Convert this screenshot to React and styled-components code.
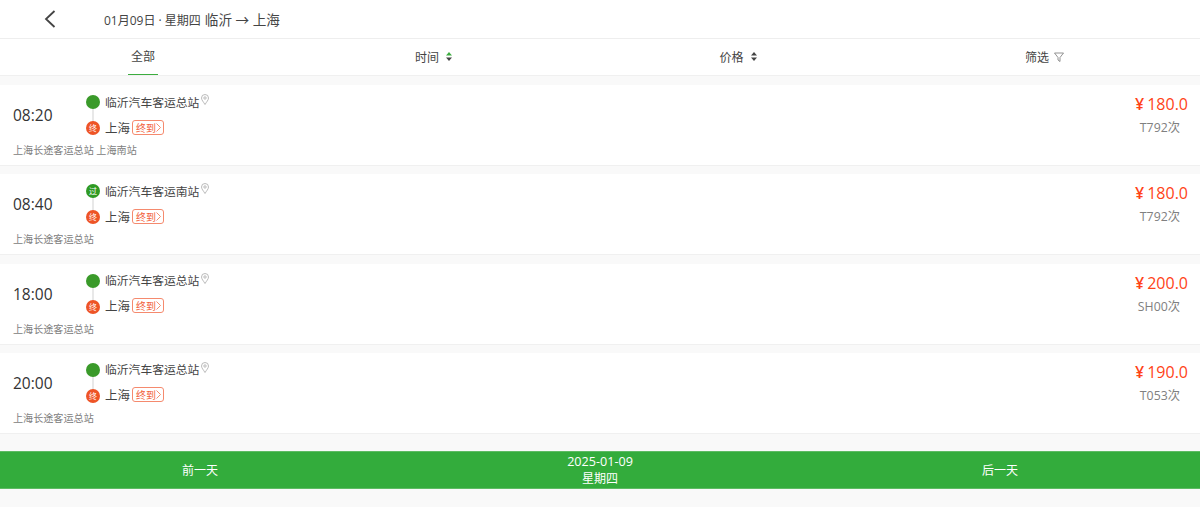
import styled, { createGlobalStyle } from "styled-components";

const GlobalStyle = createGlobalStyle`
  html, body {
    margin: 0;
    background: #f9f9f9;
    font-family: "Open Sans", "Noto Sans CJK SC", sans-serif;
    color: #333;
  }
`;

const Page = styled.div`
  width: 1200px;
  height: 507px;
  overflow: hidden;
  background: #f9f9f9;
`;

const Header = styled.div`
  display: flex;
  align-items: center;
  height: 38px;
  background: #fff;
  border-bottom: 1px solid #eeeeee;
`;

const Back = styled.div`
  display: flex;
  align-items: center;
  width: 104px;
  padding-left: 44px;
  box-sizing: border-box;
`;

const Title = styled.div`
  font-size: 12px;
  color: #444;
`;

const Route = styled.span`
  font-size: 13.6px;
  margin-left: 4px;
`;

const Tabs = styled.div`
  display: grid;
  grid-template-columns: 286px 295px 314px 299px;
  height: 36px;
  padding-right: 6px;
  background: #fff;
  border-bottom: 1px solid #f0f0f0;
`;

const Tab = styled.div`
  display: flex;
  align-items: center;
  justify-content: center;
  gap: 5px;
  padding-bottom: ${(p) => (p.$active ? "0" : "1px")};
  font-size: 12px;
  color: #444;
`;

const TabLabel = styled.div`
  display: flex;
  align-items: center;
  height: 100%;
  padding: 0 3px 1px;
  box-sizing: border-box;
  border-bottom: 1px solid #3cad3f;
`;

const List = styled.div`
  padding-top: 9px;
`;

const Card = styled.div`
  display: flex;
  justify-content: space-between;
  height: 81px;
  margin-bottom: 8.33px;
  padding: 0 12px 0 13px;
  box-sizing: border-box;
  background: #fff;
  border-bottom: 1px solid #f0f0f0;
`;

const Left = styled.div`
  display: flex;
  flex-direction: column;
`;

const Main = styled.div`
  display: flex;
  align-items: center;
  height: 58px;
`;

const Time = styled.div`
  width: 73px;
  padding-top: 2px;
  font-size: 15.5px;
  color: #333;
`;

const Stops = styled.div`
  display: flex;
  flex-direction: column;
  gap: 12px;
  position: relative;
`;

const Stop = styled.div`
  display: flex;
  align-items: center;
  gap: 5px;
  height: 14px;
  font-size: 11.8px;
  color: #444;
`;

const Line = styled.div`
  position: absolute;
  left: 6px;
  top: 13px;
  width: 2px;
  height: 16px;
  background: #e8e8e8;
`;

const Dot = styled.div`
  position: relative;
  display: flex;
  align-items: center;
  justify-content: center;
  flex: none;
  width: 14px;
  height: 14px;
  margin-top: 2px;
  border-radius: 50%;
  background: ${(p) => p.$bg};
  color: #fff;
  font-size: 8px;
  line-height: 1;
`;

const EndName = styled.span`
  font-size: 12.5px;
`;

const EndTag = styled.span`
  display: flex;
  align-items: center;
  height: 13px;
  padding: 0 2px 0 3px;
  margin-left: -3px;
  border: 1px solid #f58a6e;
  border-radius: 3px;
  color: #f2603a;
  font-size: 10px;
`;

const Sub = styled.div`
  font-size: 10.1px;
  color: #808080;
  line-height: 14px;
`;

const Right = styled.div`
  display: flex;
  flex-direction: column;
  align-items: flex-end;
  padding-top: 8px;
`;

const Price = styled.div`
  font-size: 16px;
  line-height: 22px;
  color: #ff4317;
`;

const Yen = styled.span`
  margin-right: 3px;
  font-weight: 600;
`;

const Code = styled.div`
  margin-top: 5px;
  padding-right: 8px;
  font-size: 12.3px;
  line-height: 16px;
  color: #808080;
`;

const Footer = styled.div`
  display: grid;
  grid-template-columns: repeat(3, 1fr);
  align-items: center;
  height: 38px;
  margin-top: 17px;
  background: #33ac3c;
  border-top: 1px solid #5dbb63;
  border-bottom: 1px solid #5dbb63;
  box-sizing: border-box;
  color: #fff;
  font-size: 12px;
  text-align: center;
`;

const DateBox = styled.div`
  line-height: 17px;
`;

const DateText = styled.div`
  font-size: 12.6px;
`;

const Chevron = () => (
  <svg width="12" height="18" viewBox="0 0 12 18" fill="none" stroke="#444" strokeWidth="1.8">
    <path d="M10.5 1 L2 9 L10.5 17" />
  </svg>
);

const Sort = ({ up }) => (
  <svg width="6" height="9" viewBox="0 0 6 9" style={{ marginLeft: 2 }}>
    <path d="M3 0 L6 3.6 L0 3.6 Z" fill={up || "#444"} />
    <path d="M3 9 L6 5.4 L0 5.4 Z" fill="#444" />
  </svg>
);

const Filter = () => (
  <svg width="10" height="10" viewBox="0 0 10 10" fill="none" stroke="#777" strokeWidth="0.8">
    <path d="M0.5 1 H9.5 L6 5.5 V9.5 L4 8 V5.5 Z" />
  </svg>
);

const Pin = () => (
  <svg width="8" height="11" viewBox="0 0 8 11" fill="none" stroke="#aaa" strokeWidth="0.8" style={{ marginLeft: -3, marginTop: -3 }}>
    <path d="M4 10.5 C2.5 8 0.5 6 0.5 4 A3.5 3.5 0 0 1 7.5 4 C7.5 6 5.5 8 4 10.5 Z" />
    <circle cx="4" cy="4" r="1.2" />
  </svg>
);

const TagArrow = () => (
  <svg width="5" height="9" viewBox="0 0 5 9" fill="none" stroke="#f2714d" strokeWidth="0.8">
    <path d="M0.5 0.5 L4.5 4.5 L0.5 8.5" />
  </svg>
);

const trips = [
  { time: "08:20", from: "临沂汽车客运总站", pass: false, sub: "上海长途客运总站 上海南站", price: "180.0", code: "T792次" },
  { time: "08:40", from: "临沂汽车客运南站", pass: true, sub: "上海长途客运总站", price: "180.0", code: "T792次" },
  { time: "18:00", from: "临沂汽车客运总站", pass: false, sub: "上海长途客运总站", price: "200.0", code: "SH00次" },
  { time: "20:00", from: "临沂汽车客运总站", pass: false, sub: "上海长途客运总站", price: "190.0", code: "T053次" },
];

function App() {
  return (
    <Page>
      <GlobalStyle />
      <Header>
        <Back>
          <Chevron />
        </Back>
        <Title>
          01月09日 · 星期四<Route>临沂 → 上海</Route>
        </Title>
      </Header>
      <Tabs>
        <Tab $active>
          <TabLabel>全部</TabLabel>
        </Tab>
        <Tab>
          时间 <Sort up="#3cad3f" />
        </Tab>
        <Tab>
          价格 <Sort />
        </Tab>
        <Tab>
          筛选 <Filter />
        </Tab>
      </Tabs>
      <List>
        {trips.map((t) => (
          <Card key={t.time}>
            <Left>
              <Main>
                <Time>{t.time}</Time>
                <Stops>
                  <Line />
                  <Stop>
                    <Dot $bg={t.pass ? "#2f9a24" : "#3a9a2a"}>{t.pass ? "过" : ""}</Dot>
                    {t.from}
                    <Pin />
                  </Stop>
                  <Stop>
                    <Dot $bg="#ee5426">终</Dot>
                    <EndName>上海</EndName>
                    <EndTag>
                      终到
                      <TagArrow />
                    </EndTag>
                  </Stop>
                </Stops>
              </Main>
              <Sub>{t.sub}</Sub>
            </Left>
            <Right>
              <Price>
                <Yen>¥</Yen>
                {t.price}
              </Price>
              <Code>{t.code}</Code>
            </Right>
          </Card>
        ))}
      </List>
      <Footer>
        <div>前一天</div>
        <DateBox>
          <DateText>2025-01-09</DateText>
          星期四
        </DateBox>
        <div>后一天</div>
      </Footer>
    </Page>
  );
}

export default App;
